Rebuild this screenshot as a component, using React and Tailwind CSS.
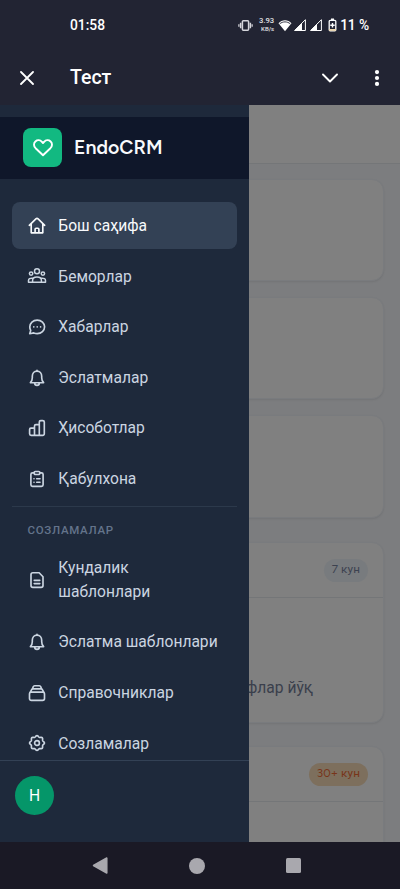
import React from "react";

function Icon({ children, size = 20, sw = 1.65 }) {
  return (
    <svg
      className="shrink-0"
      width={size}
      height={size}
      viewBox="0 0 20 20"
      fill="none"
      stroke="currentColor"
      strokeWidth={sw}
      strokeLinecap="round"
      strokeLinejoin="round"
    >
      {children}
    </svg>
  );
}

const HomeIcon = () => (
  <Icon>
    <path d="M2.3 9.3 8.9 2.9a1.6 1.6 0 0 1 2.2 0l6.6 6.4M4.2 8v8.8h11.6V8M8.1 16.8v-3.6c0-.6.4-1 1-1h1.8c.6 0 1 .4 1 1v3.6" />
  </Icon>
);
const UsersIcon = () => (
  <Icon sw={1.5}>
    <circle cx="10" cy="5.3" r="2.500" />
    <circle cx="4.100" cy="7.600" r="1.700" />
    <circle cx="15.900" cy="7.600" r="1.700" />
    <path d="M5.600 16.300v-2c0-2 1.800-3.400 4.400-3.400s4.400 1.400 4.400 3.400v2ZM5.600 16.300H1.500v-1.800c0-1.500 1.300-2.500 4.200-2.300M14.400 16.300h4.100v-1.800c0-1.500-1.300-2.500-4.200-2.300" />
  </Icon>
);
const ChatIcon = () => (
  <Icon>
    <path d="M10.200 3.100c4.200 0 7.400 2.900 7.400 6.700s-3.200 6.800-7.400 6.800c-1.300 0-2.400-.3-3.400-.7l-4.100.8 1-3.300a6.300 6.300 0 0 1-.9-3.600c0-3.800 3.200-6.700 7.400-6.700Z" />
    <path d="M6.800 9.900h.01M10.200 9.900h.01M13.600 9.900h.01" />
  </Icon>
);
const BellIcon = () => (
  <Icon>
    <path d="M10 2.300v.8M3.400 14.700h13.200c-1.300-1.300-1.900-2.700-1.900-5V8.300C14.700 5.300 12.700 3.100 10 3.100S5.300 5.300 5.300 8.300v1.400c0 2.300-.6 3.700-1.900 5ZM7.600 14.900c.1 1.500 1.100 2.400 2.400 2.400s2.300-.9 2.400-2.400" />
  </Icon>
);
const ChartIcon = () => (
  <Icon>
    <path d="M7.500 17.300H4.100a1.500 1.500 0 0 1-1.500-1.500v-4.400c0-.8.500-1.300 1.300-1.300h3.600M12.300 17.300H7.500V8.100c0-1 .5-1.500 1.400-1.500h3.400M12.300 17.300V4.100c0-.9.600-1.500 1.500-1.500h1.900c1 0 1.600.6 1.600 1.500v11.700a1.500 1.500 0 0 1-1.600 1.500Z" />
  </Icon>
);
const ClipboardIcon = () => (
  <Icon>
    <path d="M7 3.800H5.500c-1 0-1.600.7-1.600 1.600v10.300c0 1 .6 1.600 1.600 1.600h9c1 0 1.600-.6 1.600-1.600V5.400c0-.9-.6-1.600-1.600-1.600H13" />
    <path d="M8.300 2.500h3.400c.7 0 1.200.5 1.200 1.200 0 1.100-.7 1.800-1.700 1.800H8.800c-1 0-1.700-.7-1.700-1.800 0-.7.500-1.200 1.200-1.200ZM7 9.700h.01M9.700 9.700H13M7 13.200h.01M9.700 13.200H13" />
  </Icon>
);
const DocIcon = () => (
  <Icon>
    <path d="M12.100 2.700H5.900c-1.200 0-1.900.7-1.900 1.900v10.800c0 1.200.7 1.900 1.900 1.900h8.200c1.200 0 1.900-.7 1.900-1.900V6.800ZM7.200 10.300h5.600M7.200 13.600h5.600" />
  </Icon>
);
const StackIcon = () => (
  <Icon>
    <path d="M4.100 9.100h11.800c1 0 1.600.6 1.600 1.600v4.800c0 1.200-.7 1.900-1.900 1.900H4.400c-1.200 0-1.900-.7-1.900-1.900v-4.800c0-1 .6-1.600 1.600-1.600ZM3.300 9.200 4.500 6.800c.3-.6.700-.9 1.300-.9h8.400c.6 0 1 .3 1.300.9l1.200 2.400M5.500 5.900l.7-2.200c.3-.7.700-1 1.400-1h4.800c.7 0 1.100.3 1.400 1l.7 2.200" />
  </Icon>
);

// Eight evenly spaced rounded teeth around the centre.
const gearPoints = Array.from({ length: 96 }, (_, i) => {
  const a = (i / 96) * Math.PI * 2;
  const r = 6.75 + 0.65 * Math.cos(8 * a);
  return `${(10 + r * Math.cos(a)).toFixed(2)},${(10 + r * Math.sin(a)).toFixed(2)}`;
}).join(" ");

const GearIcon = () => (
  <Icon>
    <polygon points={gearPoints} />
    <circle cx="10" cy="10" r="2.400" />
  </Icon>
);

function NavItem({ icon: I, label, active }) {
  return (
    <div
      className={
        "flex min-h-[46.600px] shrink-0 items-center gap-[11.300px] rounded-[8px] py-[11.600px] pl-[15px] pr-[15.600px] text-[15.600px] leading-[23.600px] " +
        (active ? "bg-[#334155] text-[#f8fafc]" : "text-[#cbd5e1]")
      }
    >
      <I />
      <span>{label}</span>
    </div>
  );
}

const mainItems = [
  [HomeIcon, "Бош саҳифа"],
  [UsersIcon, "Беморлар"],
  [ChatIcon, "Хабарлар"],
  [BellIcon, "Эслатмалар"],
  [ChartIcon, "Ҳисоботлар"],
  [ClipboardIcon, "Қабулхона"],
];
const settingItems = [
  [DocIcon, "Кундалик шаблонлари"],
  [BellIcon, "Эслатма шаблонлари"],
  [StackIcon, "Справочниклар"],
  [GearIcon, "Созламалар"],
];

function StatusBar() {
  return (
    <div className="flex h-[50px] shrink-0 items-center pl-[70px] pr-[31px] text-[13.800px] font-medium text-white">
      <span>01:58</span>
      <div className="ml-auto flex items-center">
        <svg width="15" height="13" viewBox="0 0 17 14" fill="none" stroke="#d6d6dc">
          <rect x="5" y="1.700" width="7" height="10.600" rx="1" strokeWidth="1.700" />
          <path d="M3 4v6M14 4v6" strokeWidth="1.700" />
          <path d="M1 5.500v3M16 5.500v3" strokeWidth="1.400" />
        </svg>
        <div className="ml-[4px] w-[17px] text-right text-[7.600px] leading-[8px] text-[#e4e4e8]">
          <div>3.93</div>
          <div className="text-[6px]">KB/s</div>
        </div>
        <svg className="ml-[4px]" width="14" height="13" viewBox="0 0 14 13">
          <path d="M7 12.300.5 4.200C4 .2 10 .2 13.500 4.200Z" fill="#fff" />
          <path d="M1.700 4.900C4.700 2.200 9.300 2.200 12.300 4.900" fill="none" stroke="#222433" strokeWidth=".9" />
        </svg>
        <svg className="ml-[2px]" width="12" height="12" viewBox="0 0 12 12">
          <path d="M.6 11.500 11.400.700v10.800Z" fill="none" stroke="#fff" />
          <path d="M.5 11.600 8 4v7.600Z" fill="#fff" />
        </svg>
        <svg className="ml-[4px]" width="12" height="12" viewBox="0 0 12 12">
          <path d="M.6 11.500 11.400.700v10.800Z" fill="none" stroke="#fff" />
          <path d="M.5 11.600 7 5v6.600Z" fill="#fff" />
        </svg>
        <svg className="ml-[6px]" width="9" height="14" viewBox="0 0 9 14">
          <path d="M3 .5h3v2H3z" fill="#fff" />
          <rect x="1.200" y="2.300" width="6.600" height="10.500" rx="1" fill="none" stroke="#fff" strokeWidth="1.300" />
          <path d="M1 11h7v1.800H1z" fill="#efd9ae" />
          <path d="M4.500 5v4.600M2.300 7.300h4.400" stroke="#fff" strokeWidth="1.400" />
        </svg>
        <span className="ml-[3px] tracking-[-0.100px]">11 %</span>
      </div>
    </div>
  );
}

function TitleBar() {
  return (
    <div className="flex h-[55px] shrink-0 items-center pl-[20px] pr-[20px] text-white">
      <svg width="14" height="14" viewBox="0 0 14 14" stroke="currentColor" strokeWidth="1.800" strokeLinecap="round">
        <path d="M1 1l12 12M13 1 1 13" />
      </svg>
      <span className="ml-[36px] text-[19.500px] font-medium leading-none">Тест</span>
      <svg className="ml-auto" width="16" height="10" viewBox="0 0 16 10" fill="none" stroke="currentColor" strokeWidth="1.900" strokeLinecap="round" strokeLinejoin="round">
        <path d="M1 1.500l7 7 7-7" />
      </svg>
      <svg className="ml-[36px]" width="6" height="16" viewBox="0 0 6 16" fill="currentColor">
        <circle cx="3" cy="2.100" r="2.100" />
        <circle cx="3" cy="8" r="2.100" />
        <circle cx="3" cy="13.900" r="2.100" />
      </svg>
    </div>
  );
}

const card = "shrink-0 rounded-[12px] border border-[#797b7e] bg-[#808080] shadow-[0_1px_2px_rgba(0,0,0,0.08)] ";

function Dashboard() {
  return (
    <div className="flex h-full flex-col bg-[#7c7d7f]">
      <div className="h-[59px] shrink-0 border-b border-[#747678] bg-[#808080]" />
      <div className="flex flex-col px-4 pt-[15px]">
        <div className={card + "h-[102px]"} />
        <div className={card + "mt-[16px] h-[102px]"} />
        <div className={card + "mt-[16px] h-[103px]"} />
        <div className={card + "mt-[24px] flex h-[181px] flex-col"}>
          <div className="flex h-[55px] shrink-0 items-center justify-end border-b border-[#747678] pr-[15px]">
            <span className="flex h-[23px] items-center rounded-full bg-[#787b7e] px-[8px] text-[11.700px] tracking-[0.100px] text-[#3c4250]">7 кун</span>
          </div>
          <div className="flex flex-1 items-end justify-end whitespace-nowrap pb-[23px] pr-[70px] text-[15.600px] leading-[23px] text-[#3a3f4c]">
            флар йўқ
          </div>
        </div>
        <div className={card + "mt-[23px] h-[181px]"}>
          <div className="flex h-[55px] items-center justify-end border-b border-[#747678] pr-[15px]">
            <span className="flex h-[23px] items-center rounded-full bg-[#7d6f5d] px-[8px] text-[11.700px] tracking-[0.100px] text-[#783519]">30+ кун</span>
          </div>
        </div>
      </div>
    </div>
  );
}

function Drawer() {
  return (
    <aside className="absolute inset-y-0 left-0 flex w-[249px] flex-col bg-[#1e293b] pt-[12px]">
      <div className="flex h-[62px] shrink-0 items-center bg-[#0f172a] pb-[1px] pl-[23px]">
        <div className="flex size-[39px] items-center justify-center rounded-[8px] bg-[#12b981] text-white">
          <svg width="20" height="18" viewBox="0 0 20 18" fill="none" stroke="currentColor" strokeWidth="1.900" strokeLinejoin="round">
            <path d="M10 16.200 2.600 9.200C.5 7.100.5 4.200 2.400 2.500c2-1.800 4.800-1.500 6.500.3L10 4l1.100-1.200c1.700-1.800 4.500-2.100 6.500-.3 1.900 1.700 1.900 4.600-.2 6.700Z" />
          </svg>
        </div>
        <span className="ml-[12px] pt-[1px] text-[19.500px] font-semibold leading-none text-[#f8fafc]">EndoCRM</span>
      </div>
      <nav className="flex min-h-0 flex-1 flex-col gap-[3.800px] overflow-hidden px-[12px] pt-[23.400px]">
        {mainItems.map(([i, l], n) => (
          <NavItem key={l} icon={i} label={l} active={n === 0} />
        ))}
        <div className="mb-[6px] shrink-0 border-t border-[#2c394b] pl-[15.500px] pt-[15px] text-[11.500px] font-medium leading-[17px] tracking-[0.700px] text-[#64748b]">
          СОЗЛАМАЛАР
        </div>
        <div className="-mt-[4px] flex flex-col gap-[3.800px]">
          {settingItems.map(([i, l]) => (
            <NavItem key={l} icon={i} label={l} />
          ))}
        </div>
      </nav>
      <div className="flex h-[82px] shrink-0 border-t border-[#334155] pl-[15px] pt-[15px]">
        <div className="flex size-[39px] items-center justify-center rounded-full bg-[#059669] text-[15.600px] text-white">Н</div>
      </div>
    </aside>
  );
}

function SystemNav() {
  return (
    <div className="flex h-[47px] shrink-0 items-center bg-[#1a1925] pl-[92px] text-[#a9a8ae]">
      <svg width="16" height="17" viewBox="0 0 16 17" fill="currentColor" stroke="currentColor" strokeWidth="1.500" strokeLinejoin="round">
        <path d="M1.500 8.500 14.800 1v15Z" />
      </svg>
      <div className="ml-[81px] size-[16px] rounded-full bg-[#a9a8ae]" />
      <div className="ml-[81px] size-[15px] rounded-[1.500px] bg-[#a9a8ae]" />
    </div>
  );
}

export default function App() {
  return (
    <div className="flex h-[889px] w-[400px] flex-col overflow-hidden bg-[#222433] font-['Roboto',sans-serif]">
      <StatusBar />
      <TitleBar />
      <main className="relative h-[737px] shrink-0 overflow-hidden font-['Figtree','Roboto',sans-serif]">
        <Dashboard />
        <Drawer />
      </main>
      <SystemNav />
    </div>
  );
}
